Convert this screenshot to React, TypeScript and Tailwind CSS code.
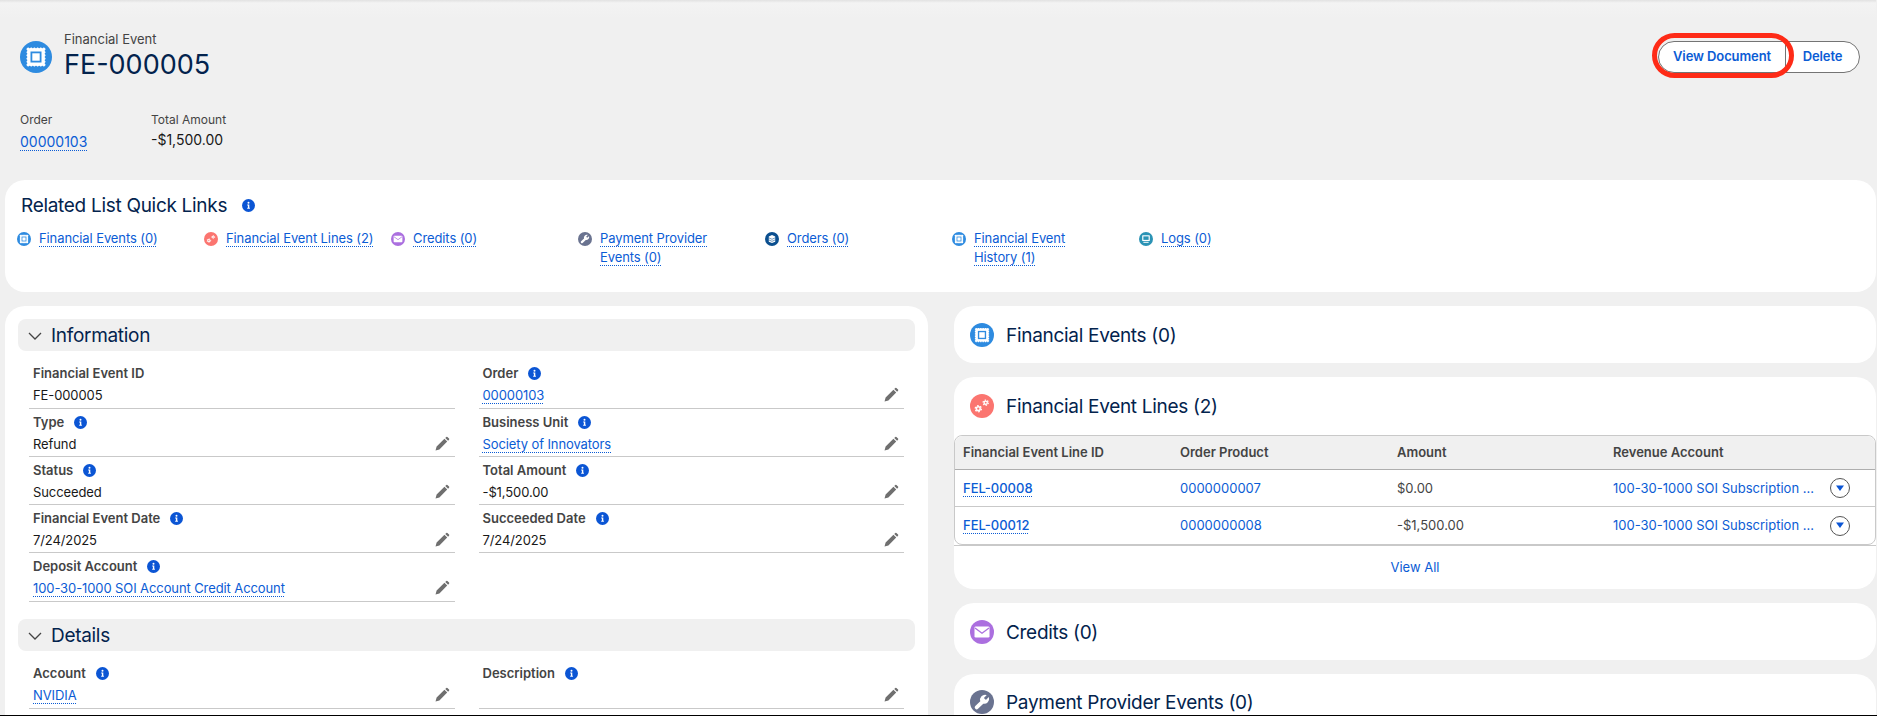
const font = { fontFamily: "Inter, 'Liberation Sans', sans-serif" }

const stampDots = [0, 1, 2, 3, 4, 5, 6]

function FinancialIcon({ size }: { size: number }) {
  return (
    <svg width={size} height={size} viewBox="0 0 32 32" className="shrink-0">
      <circle cx="16" cy="16" r="16" fill="#2e8be0" />
      <rect x="6.500" y="6.500" width="19" height="19" rx="1" fill="#fff" />
      {stampDots.map((n) => (
        <g key={n} fill="#2e8be0">
          <circle cx={6.500 + n * 3.167} cy="6.300" r="1" />
          <circle cx={6.500 + n * 3.167} cy="25.700" r="1" />
          <circle cx="6.300" cy={6.500 + n * 3.167} r="1" />
          <circle cx="25.700" cy={6.500 + n * 3.167} r="1" />
        </g>
      ))}
      <rect x="10.500" y="10.500" width="11" height="11" fill="#2e8be0" />
      <rect x="12.300" y="12.300" width="7.400" height="7.400" fill="#fff" />
    </svg>
  )
}

function Gear({ x, y, r }: { x: number; y: number; r: number }) {
  const circ = 2 * Math.PI * (r + 0.4)
  return (
    <g>
      <circle cx={x} cy={y} r={r} fill="#fff" />
      <circle
        cx={x}
        cy={y}
        r={r + 0.4}
        fill="none"
        stroke="#fff"
        strokeWidth="1.300"
        strokeDasharray={`${circ / 12} ${circ / 12}`}
      />
      <circle cx={x} cy={y} r={r * 0.42} fill="#fb7570" />
    </g>
  )
}

function GearsIcon({ size }: { size: number }) {
  return (
    <svg width={size} height={size} viewBox="0 0 24 24" className="shrink-0">
      <circle cx="12" cy="12" r="12" fill="#fb7570" />
      <Gear x={8.300} y={14.700} r={2.700} />
      <Gear x={15.700} y={8.700} r={2.200} />
    </svg>
  )
}

function MailIcon({ size }: { size: number }) {
  return (
    <svg width={size} height={size} viewBox="0 0 24 24" className="shrink-0">
      <circle cx="12" cy="12" r="12" fill="#ab6fdf" />
      <rect x="4.500" y="6.500" width="15" height="11" rx="1.300" fill="#fff" />
      <path d="M5 8 12 13.200 19 8" fill="none" stroke="#ab6fdf" strokeWidth="1.300" />
    </svg>
  )
}

function WrenchIcon({ size }: { size: number }) {
  return (
    <svg width={size} height={size} viewBox="0 0 24 24" className="shrink-0">
      <circle cx="12" cy="12" r="12" fill="#6a7390" />
      <path
        fill="#fff"
        d="M19 7.600c.1-.3-.2-.5-.4-.3l-2.300 2.300a.6.600 0 0 1-.8 0l-1.200-1.200a.6.600 0 0 1 0-.8l2.300-2.300c.2-.2 0-.5-.3-.4a5 5 0 0 0-6 6.300L5.300 16a1.900 1.900 0 0 0 2.700 2.700l5.300-5a5 5 0 0 0 5.700-6.100Z"
      />
    </svg>
  )
}

function OrdersIcon({ size }: { size: number }) {
  return (
    <svg width={size} height={size} viewBox="0 0 24 24" className="shrink-0">
      <circle cx="12" cy="12" r="12" fill="#0b4f8f" />
      <path fill="#fff" d="M6.500 7.500 12 5l5.500 2.500V16.500L12 19l-5.500-2.500z" />
      <path fill="none" stroke="#0b4f8f" strokeWidth="1" d="M6.500 10 12 12.500 17.500 10M6.500 13.500 12 16l5.500-2.500" />
    </svg>
  )
}

function LogsIcon({ size }: { size: number }) {
  return (
    <svg width={size} height={size} viewBox="0 0 24 24" className="shrink-0">
      <circle cx="12" cy="12" r="12" fill="#2b93b5" />
      <rect x="5.500" y="5.500" width="13" height="10" rx="1" fill="#fff" />
      <rect x="7.500" y="7.500" width="9" height="6" fill="#2b93b5" />
      <rect x="7.500" y="16.800" width="9" height="1.700" fill="#fff" />
    </svg>
  )
}

function InfoIcon() {
  return (
    <svg width="13" height="13" viewBox="0 0 13 13" className="shrink-0">
      <circle cx="6.500" cy="6.500" r="6.500" fill="#0b55d4" />
      <circle cx="6.500" cy="3.800" r="1" fill="#fff" />
      <path fill="#fff" d="M5.200 5.600h2.100v3.200h.6v1H5.200v-1h.7V6.600h-.7z" />
    </svg>
  )
}

function PencilIcon() {
  return (
    <svg width="15" height="15" viewBox="0 0 14 14" className="-mt-[2px] shrink-0">
      <path fill="#6f6f6f" d="M.5 13.500l1-3.600 7.300-7.300 2.600 2.600-7.300 7.300zM9.600 1.800l.9-.9a.8.8 0 0 1 1.100 0l1.500 1.500a.8.8 0 0 1 0 1.100l-.9.900z" />
    </svg>
  )
}

function TextLink({ children }: { children: React.ReactNode }) {
  return (
    <a className="text-[#0b5cd5] underline decoration-dotted decoration-1 underline-offset-[3px]">{children}</a>
  )
}

const quickLinks = [
  { icon: <FinancialIcon size={14} />, label: "Financial Events (0)" },
  { icon: <GearsIcon size={14} />, label: "Financial Event Lines (2)" },
  { icon: <MailIcon size={14} />, label: "Credits (0)" },
  { icon: <WrenchIcon size={14} />, label: "Payment Provider\nEvents (0)" },
  { icon: <OrdersIcon size={14} />, label: "Orders (0)" },
  { icon: <FinancialIcon size={14} />, label: "Financial Event\nHistory (1)" },
  { icon: <LogsIcon size={14} />, label: "Logs (0)" },
]

type Field = {
  label: string
  value: string
  link?: boolean
  noInfo?: boolean
  noEdit?: boolean
  tall?: boolean
  first?: boolean
}

const infoFields: Field[] = [
  { label: "Financial Event ID", value: "FE-000005", noInfo: true, noEdit: true, first: true },
  { label: "Order", value: "00000103", link: true, first: true },
  { label: "Type", value: "Refund" },
  { label: "Business Unit", value: "Society of Innovators", link: true },
  { label: "Status", value: "Succeeded" },
  { label: "Total Amount", value: "-$1,500.00" },
  { label: "Financial Event Date", value: "7/24/2025" },
  { label: "Succeeded Date", value: "7/24/2025" },
  { label: "Deposit Account", value: "100-30-1000 SOI Account Credit Account", link: true, tall: true },
]

const detailFields: Field[] = [
  { label: "Account", value: "NVIDIA", link: true, tall: true },
  { label: "Description", value: "", tall: true },
]

function FieldRow({ field }: { field: Field }) {
  return (
    <div
      className={`border-b border-[#c9c9c9] pl-1 ${field.first ? "pt-[3px]" : "pt-1"} ${field.tall ? "h-[49px]" : "h-[48px]"}`}
    >
      <div className="flex h-[18px] items-center gap-[10px] text-[13px] font-semibold leading-[18px] text-[#444]">
        {field.label}
        {!field.noInfo && <InfoIcon />}
      </div>
      <div className="mt-[3px] flex h-[20px] items-center justify-between pr-[5px] text-[13px] leading-[20px] tracking-[-0.1px] text-[#181818]">
        <span>{field.link ? <TextLink>{field.value}</TextLink> : field.value}</span>
        {!field.noEdit && <PencilIcon />}
      </div>
    </div>
  )
}

function SectionHeader({ title }: { title: string }) {
  return (
    <div className="flex h-[32px] items-center gap-[9px] rounded-lg bg-[#f0f0f0] pl-[10px] text-[19px] leading-none tracking-[-0.3px] text-[#03234d]">
      <svg width="14" height="8" viewBox="0 0 14 8" className="mt-[2px]">
        <path d="M1 1l6 6 6-6" fill="none" stroke="#444" strokeWidth="1.300" />
      </svg>
      {title}
    </div>
  )
}

function ListCardTitle({ icon, title }: { icon: React.ReactNode; title: string }) {
  return (
    <div className="flex items-center gap-3 pl-4 text-[19px] leading-none tracking-[-0.3px] text-[#03234d]">
      {icon}
      <span className="mt-px">{title}</span>
    </div>
  )
}

const lines = [
  { id: "FEL-00008", product: "0000000007", amount: "$0.00" },
  { id: "FEL-00012", product: "0000000008", amount: "-$1,500.00" },
]

export default function App() {
  return (
    <div style={font} className="h-[716px] overflow-hidden border-b border-black bg-[#f0f0f0] pl-[5px] pr-px">
      {/* page header */}
      <div className="-ml-[5px] h-[180px] bg-gradient-to-b from-[#e2e2e2] via-[#f3f3f3] via-[3px] to-[#f0f0f0] to-[18px] pl-5 pr-4 pt-[30px]">
        <div className="flex items-start justify-between">
          <div className="flex items-center gap-3">
            <div className="mt-[2px]">
              <FinancialIcon size={32} />
            </div>
            <div>
              <div className="text-[13px] leading-[18px] text-[#444]">Financial Event</div>
              <div className="text-[27px] leading-[34px] text-[#03234d]">FE-000005</div>
            </div>
          </div>
          <div className="relative mt-[11px] flex h-[32px] text-[13px] font-semibold tracking-[-0.1px] text-[#0b5cd5]">
            <button className="w-[128px] rounded-l-full border border-[#747474] bg-white">View Document</button>
            <button className="-ml-px w-[75px] rounded-r-full border border-[#747474] bg-white">Delete</button>
            <div className="absolute -left-[6px] -top-[8px] h-[45px] w-[142px] rounded-full border-[5px] border-[#fe2b17]" />
          </div>
        </div>
        <div className="mt-[29px] flex leading-[18px]">
          <div className="w-[131px]">
            <div className="text-[12px] text-[#444]">Order</div>
            <div className="mt-[3px] text-[14px] leading-[20px]">
              <TextLink>00000103</TextLink>
            </div>
          </div>
          <div>
            <div className="text-[12px] text-[#444]">Total Amount</div>
            <div className="mt-px text-[14px] leading-[20px] text-[#181818]">-$1,500.00</div>
          </div>
        </div>
      </div>

      {/* quick links */}
      <div className="h-[112px] rounded-[20px] bg-white pl-3 pt-[13px]">
        <div className="flex h-[24px] items-center gap-[15px] pl-1 text-[19px] leading-none tracking-[-0.3px] text-[#03234d]">
          Related List Quick Links
          <InfoIcon />
        </div>
        <div className="mt-[12px] grid grid-cols-[repeat(7,187px)] text-[13px] leading-[19px] tracking-[-0.1px]">
          {quickLinks.map((link) => (
            <div key={link.label} className="flex gap-2">
              <div className="mt-[3px]">{link.icon}</div>
              <span className="whitespace-pre-line">
                <TextLink>{link.label}</TextLink>
              </span>
            </div>
          ))}
        </div>
      </div>

      <div className="mt-[14px] flex gap-[26px]">
        {/* left column */}
        <div className="h-[500px] w-[923px] rounded-[20px] bg-white px-[13px] pt-[13px]">
          <SectionHeader title="Information" />
          <div className="mt-[10px] grid grid-cols-2 gap-x-6 px-[11px]">
            {infoFields.map((field) => (
              <FieldRow key={field.label} field={field} />
            ))}
          </div>
          <div className="mt-[17px]">
            <SectionHeader title="Details" />
          </div>
          <div className="mt-[9px] grid grid-cols-2 gap-x-6 px-[11px]">
            {detailFields.map((field) => (
              <FieldRow key={field.label} field={field} />
            ))}
          </div>
        </div>

        {/* right column */}
        <div className="flex flex-1 flex-col gap-[14px]">
          <div className="flex h-[57px] items-center rounded-[20px] bg-white">
            <ListCardTitle icon={<FinancialIcon size={24} />} title="Financial Events (0)" />
          </div>

          <div className="h-[212px] rounded-[20px] bg-white">
            <div className="flex h-[58px] items-center">
              <ListCardTitle icon={<GearsIcon size={24} />} title="Financial Event Lines (2)" />
            </div>
            <div className="rounded-lg border border-[#c9c9c9] text-[13px]">
              <div className="grid h-[34px] grid-cols-[217px_217px_216px_1fr] items-center rounded-t-lg border-b border-[#aeaeae] bg-[#f0f0f0] pl-2 font-semibold text-[#444]">
                <div>Financial Event Line ID</div>
                <div>Order Product</div>
                <div>Amount</div>
                <div>Revenue Account</div>
              </div>
              {lines.map((line, i) => (
                <div
                  key={line.id}
                  className={`grid h-[37px] grid-cols-[217px_217px_216px_1fr] items-center pl-2 pt-px ${i === 0 ? "border-b border-[#c9c9c9]" : ""}`}
                >
                  <div className="font-medium">
                    <TextLink>{line.id}</TextLink>
                  </div>
                  <div className="text-[#0b5cd5]">{line.product}</div>
                  <div className="text-[#444]">{line.amount}</div>
                  <div className="flex items-center justify-between pr-[25px] text-[#0b5cd5]">
                    <span>100-30-1000 SOI Subscription ...</span>
                    <span className="-mt-px flex h-5 w-5 items-center justify-center rounded-full border border-[#555] bg-white">
                      <svg width="10" height="7" viewBox="0 0 10 7">
                        <path d="M1 .500h8L5 6z" fill="#0b55d4" />
                      </svg>
                    </span>
                  </div>
                </div>
              ))}
            </div>
            <div className="flex h-[43px] items-center justify-center border-t border-[#c9c9c9] pt-[2px] text-[13px] text-[#0b5cd5]">
              View All
            </div>
          </div>

          <div className="flex h-[57px] items-center rounded-[20px] bg-white">
            <ListCardTitle icon={<MailIcon size={24} />} title="Credits (0)" />
          </div>

          <div className="h-[200px] rounded-[20px] bg-white pt-4">
            <ListCardTitle icon={<WrenchIcon size={24} />} title="Payment Provider Events (0)" />
          </div>
        </div>
      </div>
    </div>
  )
}
